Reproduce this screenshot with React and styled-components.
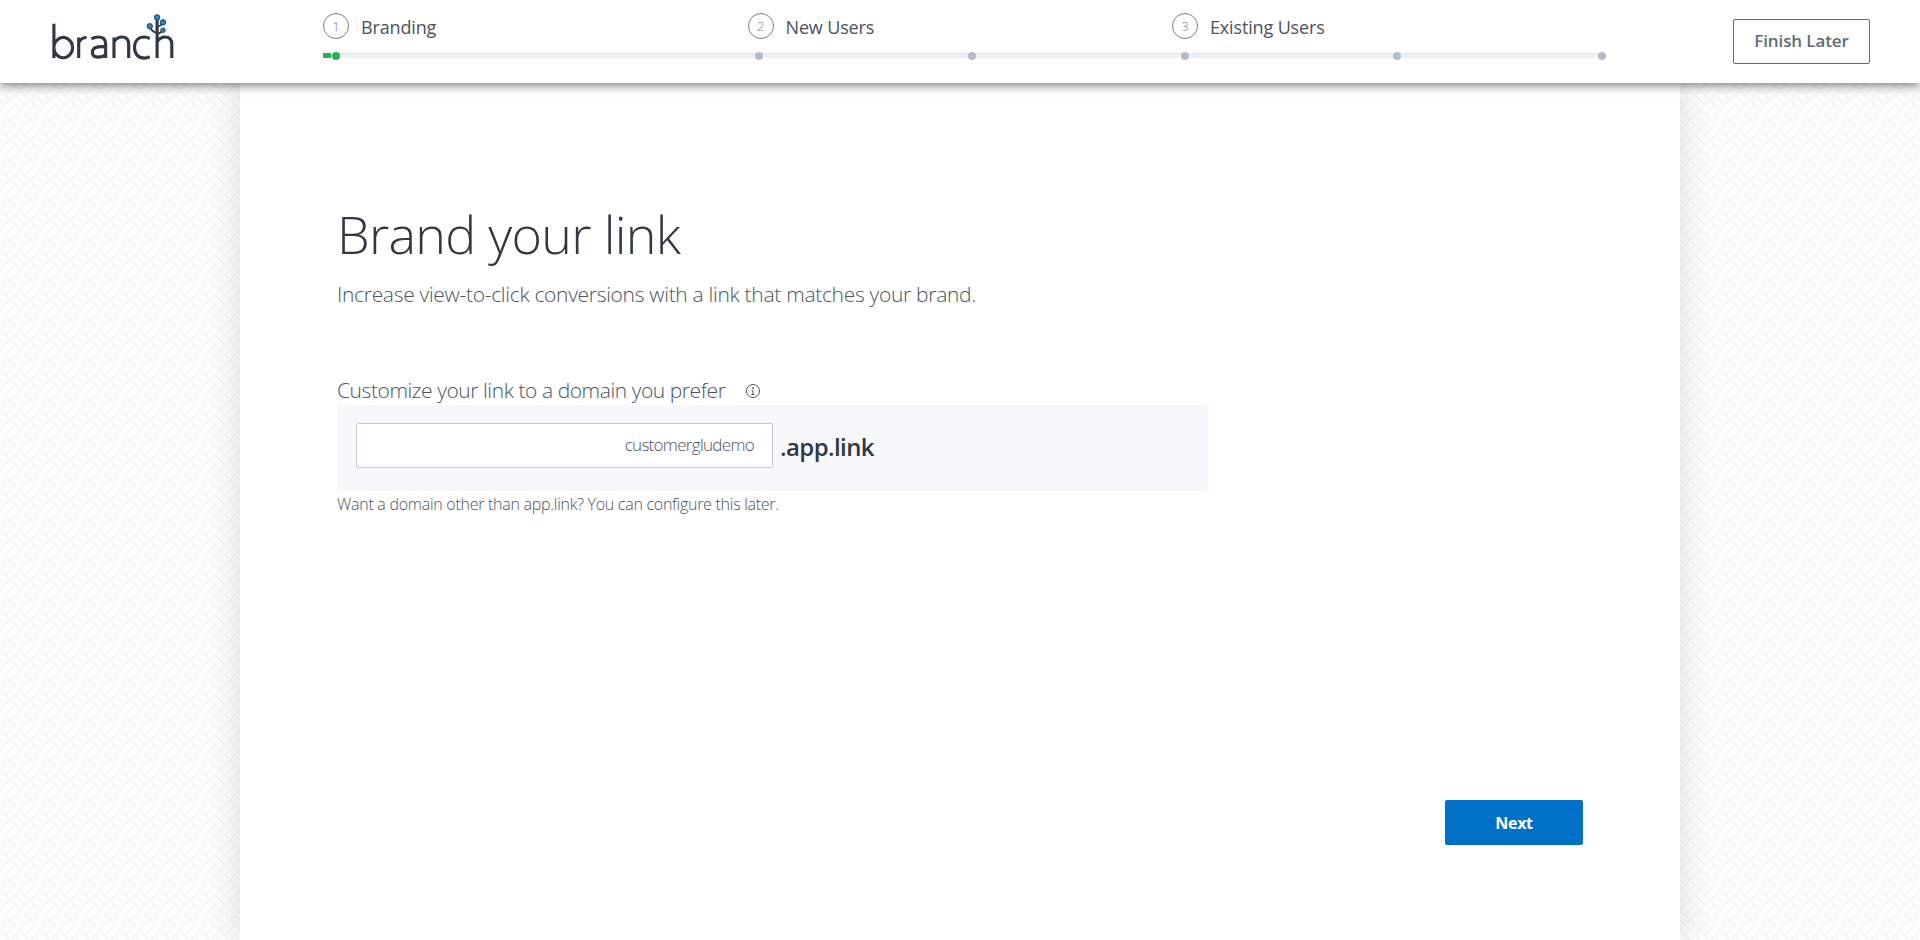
import React from 'react';
import styled, { createGlobalStyle } from 'styled-components';

const weave = encodeURIComponent(
  `<svg xmlns="http://www.w3.org/2000/svg" width="20" height="20"><rect width="20" height="20" fill="#fdfdfd"/><path stroke="#f4f4f4" stroke-width="1.5" fill="none" d="M10 0L0 10M10 0L20 10M0 10L10 20M20 10L10 20M0 0L5 5M15 15L20 20M5 15L15 5"/></svg>`
);

const GlobalStyle = createGlobalStyle`
  html, body {
    margin: 0;
    padding: 0;
    height: 100%;
    overflow: hidden;
  }
  body {
    font-family: "Open Sans", "Noto Sans", sans-serif;
    background: #fdfdfd url("data:image/svg+xml,${weave}");
    color: #2f3844;
  }
`;

const Page = styled.div`
  height: 940px;
  display: flex;
  flex-direction: column;
  overflow: hidden;
`;

const Header = styled.header`
  position: relative;
  z-index: 2;
  flex: none;
  height: 83px;
  background: #fff;
  box-shadow: 0 2px 10px rgba(0, 0, 0, 0.55);
  display: flex;
  align-items: flex-start;
`;

const LogoBox = styled.div`
  flex: none;
  width: 323px;
  padding: 14px 0 0 52px;
  box-sizing: border-box;
`;

const Progress = styled.div`
  flex: none;
  width: 1284px;
  padding-top: 13px;
`;

const Steps = styled.div`
  display: flex;
  height: 26px;
`;

const Step = styled.div`
  width: 424.5px;
  display: flex;
  align-items: center;
  gap: 12px;
  font-size: 18px;
  letter-spacing: -0.15px;
  color: #4b5360;
`;

const StepName = styled.span`
  padding-top: 2px;
`;

const StepNumber = styled.span`
  width: 24px;
  height: 24px;
  border: 1px solid #7b818b;
  border-radius: 50%;
  display: flex;
  align-items: center;
  justify-content: center;
  font-size: 13px;
  font-weight: 300;
  color: #7b818b;
`;

const Track = styled.div`
  position: relative;
  margin: 14px 7px 0 0;
  height: 5px;
  background: #eef0f3;
  border-top: 1px solid #e2e4e8;
  box-sizing: border-box;
`;

const Done = styled.span`
  position: absolute;
  left: 0;
  top: -1px;
  width: 13px;
  height: 5px;
  background: linear-gradient(to right, #20b455 8px, #fff 8px);
`;

const Dot = styled.span`
  position: absolute;
  top: -2px;
  width: 8px;
  height: 8px;
  margin-left: -4px;
  border-radius: 50%;
  background: ${p => (p.$active ? '#20b455' : '#b2bccb')};
`;

const LaterButton = styled.button`
  margin: 19px 0 0 126px;
  width: 137px;
  height: 45px;
  padding: 0 0 2px;
  background: #fff;
  border: 1px solid #5e6b79;
  border-radius: 2px;
  font: 600 17px "Open Sans", sans-serif;
  letter-spacing: -0.1px;
  color: #5e6b79;
`;

const Card = styled.main`
  flex: 1;
  width: 1440px;
  margin-left: 240px;
  box-sizing: border-box;
  background: #fff;
  box-shadow: 0 0 30px rgba(0, 0, 0, 0.13);
  padding: 117px 97px 0 97px;
  display: flex;
  flex-direction: column;
  align-items: flex-start;
`;

const Title = styled.h1`
  margin: 0;
  font-size: 52px;
  line-height: 68px;
  font-weight: 300;
  letter-spacing: -0.7px;
  color: #2f3844;
`;

const Subtitle = styled.p`
  margin: 12px 0 0;
  font-size: 21px;
  line-height: 28px;
  font-weight: 300;
  letter-spacing: -0.3px;
  color: #4b5360;
`;

const Label = styled.div`
  margin-top: 68px;
  display: flex;
  align-items: center;
  gap: 20px;
  font-size: 21px;
  line-height: 28px;
  font-weight: 300;
  letter-spacing: -0.43px;
  color: #4b5360;
`;

const DomainPanel = styled.div`
  margin-top: 1px;
  width: 872px;
  height: 86px;
  box-sizing: border-box;
  padding: 18px 19px;
  background: #f7f8fc;
  border-radius: 2px;
  display: flex;
  align-items: flex-start;
  gap: 7px;
`;

const DomainInput = styled.input`
  width: 417px;
  height: 45px;
  box-sizing: border-box;
  padding: 0 18px 2px;
  background: #fff;
  border: 1px solid #c3c9d1;
  border-radius: 2px;
  text-align: right;
  font: 300 17px "Open Sans", sans-serif;
  letter-spacing: -0.7px;
  color: #4b5360;
`;

const Suffix = styled.span`
  font-size: 24px;
  line-height: 48px;
  font-weight: 600;
  letter-spacing: -0.6px;
  color: #2f3844;
`;

const Hint = styled.div`
  margin-top: 3px;
  font-size: 16px;
  line-height: 20px;
  font-weight: 300;
  letter-spacing: -0.27px;
  color: #4b5360;
`;

const Footer = styled.div`
  align-self: flex-end;
  margin-top: 286px;
`;

const NextButton = styled.button`
  width: 138px;
  height: 45px;
  background: #0071c7;
  border: none;
  border-radius: 2px;
  font: 700 16px "Open Sans", sans-serif;
  letter-spacing: -0.3px;
  color: #fff;
`;

const InfoSvg = styled.svg`
  margin-top: 2px;
`;

const Logo = () => (
  <svg width="122" height="49" viewBox="0 0 124 50" fill="none">
    <g stroke="#2f3844" strokeWidth="3.2">
      <path d="M1.700 10V45M1.700 34.200a9.500 10.300 0 1 1 0 .1" />
      <path d="M27 45V24M27 29c2-3.500 4.500-5 8-5" />
      <path d="M40 25.500c2-1.300 4-2 7-2 5.500 0 7.500 2.500 7.500 7v14.300M54.500 33.500c-9-.8-13.500.8-13.500 5.500 0 3.500 2.500 5 5.500 5 3.500 0 6.500-1 8-2.500" />
      <path d="M63 45V24M63 28c2.500-3 5-4.500 8-4.500 5 0 7 3 7 7.500v14" />
      <path d="M99.500 25c-2-1-3.700-1.500-5.500-1.500-6 0-10 4-10 10.800S88 45 94 45c2 0 3.700-.5 5.500-1.500" />
      <path d="M107 45V6M107 28c2.500-3 5-4.500 8-4.500 5 0 7 3 7 7.500v14" />
    </g>
    <g stroke="#2f3844" strokeWidth="1.800">
      <path d="M107 19c-3 0-5-1.500-7-5M107 13c2-.5 4-1.500 6-3.500M107 20c2 0 4-1 6-3" />
    </g>
    <g fill="#2786bd" stroke="#24465f" strokeWidth="1">
      <circle cx="107" cy="3.500" r="2.800" />
      <circle cx="99.500" cy="12.500" r="2.800" />
      <circle cx="113" cy="8.500" r="2.800" />
      <circle cx="113" cy="16.500" r="2.300" />
    </g>
  </svg>
);

const InfoIcon = () => (
  <InfoSvg width="16" height="16" viewBox="0 0 16 16" fill="none" stroke="#4b5360">
    <circle cx="8" cy="8" r="6.500" />
    <path d="M8 7.500V11.500M6.500 11.500H9.500M6.800 7.500H8" />
    <circle cx="8" cy="5" r="0.500" fill="#4b5360" />
  </InfoSvg>
);

const stepList = [
  ['1', 'Branding'],
  ['2', 'New Users'],
  ['3', 'Existing Users'],
];

const dotPositions = [13, 436, 649, 862, 1074, 1279];

export default function App() {
  return (
    <Page>
      <GlobalStyle />
      <Header>
        <LogoBox>
          <Logo />
        </LogoBox>
        <Progress>
          <Steps>
            {stepList.map(([n, name]) => (
              <Step key={n}>
                <StepNumber>{n}</StepNumber>
                <StepName>{name}</StepName>
              </Step>
            ))}
          </Steps>
          <Track>
            <Done />
            {dotPositions.map((x, i) => (
              <Dot key={x} $active={i === 0} style={{ left: x }} />
            ))}
          </Track>
        </Progress>
        <LaterButton>Finish Later</LaterButton>
      </Header>
      <Card>
        <Title>Brand your link</Title>
        <Subtitle>Increase view-to-click conversions with a link that matches your brand.</Subtitle>
        <Label>
          Customize your link to a domain you prefer
          <InfoIcon />
        </Label>
        <DomainPanel>
          <DomainInput defaultValue="customergludemo" />
          <Suffix>.app.link</Suffix>
        </DomainPanel>
        <Hint>Want a domain other than app.link? You can configure this later.</Hint>
        <Footer>
          <NextButton>Next</NextButton>
        </Footer>
      </Card>
    </Page>
  );
}
